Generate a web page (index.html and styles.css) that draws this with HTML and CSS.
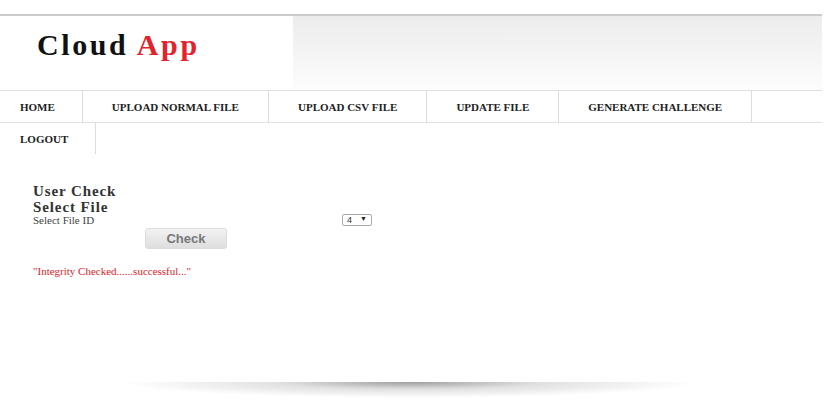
FILE: index.html
```html
<!DOCTYPE html>
<html lang="en">
<head>
    <meta charset="UTF-8">
    <meta name="viewport" content="width=device-width, initial-scale=1.0">
    <title>Cloud App - User Check</title>
    <link rel="stylesheet" href="styles.css">
</head>
<body>
    <div class="wrapper">
        <div class="header">
            <div class="logo"><span class="logo-dark">Cloud</span> <span class="logo-red">App</span></div>
            <div class="header-fill"></div>
        </div>

        <div class="menu">
            <ul class="menu-row">
                <li class="first"><a href="#">HOME</a></li>
                <li><a href="#">UPLOAD NORMAL FILE</a></li>
                <li><a href="#">UPLOAD CSV FILE</a></li>
                <li><a href="#">UPDATE FILE</a></li>
                <li><a href="#">GENERATE CHALLENGE</a></li>
            </ul>
            <ul class="menu-row last">
                <li class="first"><a href="#">LOGOUT</a></li>
            </ul>
        </div>

        <div class="content">
            <h3>User Check</h3>
            <h3>Select File</h3>
            <form class="check-form" onsubmit="return false;">
                <div class="form-row">
                    <label for="fileId">Select File ID</label>
                    <div class="select-box">
                        <select id="fileId" name="fileId">
                            <option>1</option>
                            <option>2</option>
                            <option>3</option>
                            <option selected>4</option>
                        </select>
                    </div>
                </div>
                <button type="submit" class="btn">Check</button>
            </form>
            <p class="message">"Integrity Checked......successful..."</p>
        </div>

        <div class="shadow"></div>
    </div>
</body>
</html>
```

FILE: styles.css
```css
body {
    font-family: "Liberation Serif", "Times New Roman", serif;
    margin: 0;
    padding: 0;
    background-color: white;
}
.wrapper {
    width: 822px;
    padding-top: 14px;
}
.header {
    display: flex;
    height: 74px;
    border-top: 2px solid #cbcbcb;
    border-bottom: 1px solid #e0e0e0;
}
.logo {
    width: 256px;
    padding: 13px 0 0 37px;
    font-size: 30px;
    line-height: 32px;
    font-weight: bold;
    letter-spacing: 2.6px;
}
.logo-dark {
    color: #111;
}
.logo-red {
    color: #e3222b;
}
.header-fill {
    flex: 1;
    background: linear-gradient(to bottom, #ececec, #f6f6f6 60%, #fdfdfd);
}
.menu-row {
    display: flex;
    list-style: none;
    margin: 0;
    padding: 0;
    border-bottom: 1px solid #e0e0e0;
}
.menu-row.last {
    border-bottom: none;
}
.menu-row li {
    border-right: 1px solid #dcdcdc;
    padding: 0 29px 0 29px;
    line-height: 30px;
}
.menu-row.last li {
    line-height: 29px;
}
.menu-row li.first {
    padding: 0 27px 0 20px;
}
.menu-row a {
    font-size: 11px;
    font-weight: bold;
    color: #222;
    text-decoration: none;
}
.content {
    padding: 29px 0 0 33px;
}
.content h3 {
    margin: 0;
    font-size: 15px;
    line-height: 16px;
    letter-spacing: 0.9px;
    color: #333;
}
.form-row {
    display: grid;
    grid-template-columns: 309px auto;
    align-items: center;
    height: 13px;
    margin-top: -2px;
    font-size: 11px;
    color: #444;
}
.select-box {
    position: relative;
    width: 30px;
}
.select-box select {
    appearance: none;
    -webkit-appearance: none;
    width: 30px;
    height: 12px;
    padding: 0 0 0 4px;
    border: 1px solid #a9a9a9;
    border-radius: 2px;
    background: white;
    font-family: "Liberation Sans", Arial, sans-serif;
    font-size: 9px;
    line-height: 10px;
    color: #333;
}
.select-box::after {
    content: "\25BC";
    position: absolute;
    right: 5px;
    top: 1px;
    font-size: 7px;
    line-height: 10px;
    color: #222;
    pointer-events: none;
}
.btn {
    display: block;
    width: 82px;
    height: 21px;
    margin: 2px 0 0 112px;
    padding: 0;
    border: 1px solid #dcdcdc;
    border-radius: 3px;
    background: linear-gradient(to bottom, #f2f2f2, #dedede);
    font-family: "Liberation Sans", Arial, sans-serif;
    font-size: 13px;
    font-weight: bold;
    color: #777;
    cursor: pointer;
}
.message {
    margin: 15px 0 0 0;
    font-size: 11px;
    line-height: 14px;
    color: #dc2329;
}
.shadow {
    width: 580px;
    height: 16px;
    margin: 104px 0 0 120px;
    background: radial-gradient(ellipse 50% 100% at 50% 0%, rgba(0, 0, 0, 0.38), rgba(0, 0, 0, 0.12) 45%, rgba(0, 0, 0, 0) 100%);
}
```
